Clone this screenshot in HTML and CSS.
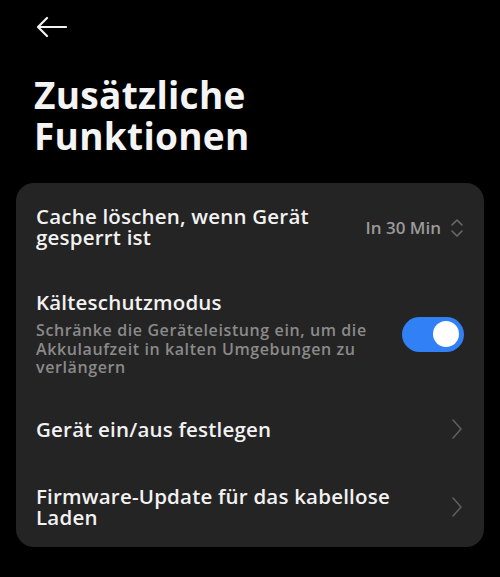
FILE: index.html
```html
<!DOCTYPE html>
<html lang="de">
<head>
<meta charset="utf-8">
<link rel="stylesheet" href="styles.css">
</head>
<body>
<div class="screen">
  <header class="topbar">
    <svg class="back" width="32" height="22" viewBox="0 0 32 22"><path d="M31 11H3M12 2L3 11l9 9" fill="none" stroke="#f2f2f2" stroke-width="2.2" stroke-linecap="round" stroke-linejoin="round"/></svg>
  </header>
  <h1 class="title"><span class="line">Zusätzliche</span><span class="line">Funktionen</span></h1>
  <section class="card">
    <div class="row row1">
      <div class="text"><div class="label">Cache löschen, wenn Gerät gesperrt ist</div></div>
      <div class="value">In 30 Min</div>
      <svg class="updown" width="14" height="22" viewBox="0 0 14 22"><path d="M2 8l5-5 5 5M2 14l5 5 5-5" fill="none" stroke="#6a6a6a" stroke-width="1.6" stroke-linecap="round" stroke-linejoin="round"/></svg>
    </div>
    <div class="row row2">
      <div class="text">
        <div class="label">Kälteschutzmodus</div>
        <div class="sub">Schränke die Geräteleistung ein, um die Akkulaufzeit in kalten Umgebungen zu verlängern</div>
      </div>
      <div class="toggle"><span class="knob"></span></div>
    </div>
    <div class="row row3">
      <div class="text"><div class="label">Gerät ein/aus festlegen</div></div>
      <svg class="chev" width="12" height="20" viewBox="0 0 12 20"><path d="M2 1l8 9-8 9" fill="none" stroke="#5e5e5e" stroke-width="1.6" stroke-linecap="round" stroke-linejoin="round"/></svg>
    </div>
    <div class="row row4">
      <div class="text"><div class="label">Firmware-Update für das kabellose Laden</div></div>
      <svg class="chev" width="12" height="20" viewBox="0 0 12 20"><path d="M2 1l8 9-8 9" fill="none" stroke="#5e5e5e" stroke-width="1.6" stroke-linecap="round" stroke-linejoin="round"/></svg>
    </div>
  </section>
</div>
</body>
</html>
```

FILE: styles.css
```css
html, body {
  margin: 0;
  padding: 0;
  background: #000;
}
body {
  font-family: "Open Sans", "Noto Sans", sans-serif;
  color: #f2f2f2;
}
.screen {
  width: 500px;
  height: 577px;
  overflow: hidden;
}
.topbar {
  height: 54px;
  display: flex;
  align-items: center;
  padding-left: 35px;
}
.back {
  display: block;
  margin-top: -1px;
}
.title {
  margin: 0;
  padding: 20px 0 0 34px;
  font-size: 37px;
  line-height: 41px;
  font-weight: 700;
  letter-spacing: 0.3px;
  color: #f4f4f4;
}
.title .line {
  display: block;
}
.card {
  margin: 27px 16px 0 16px;
  background: #242424;
  border-radius: 18px;
  padding: 0 20px;
}
.row {
  display: flex;
  align-items: center;
}
.text {
  flex: 1;
  min-width: 0;
}
.label {
  font-size: 20.5px;
  line-height: 21px;
  font-weight: 600;
  letter-spacing: 0.2px;
  color: #f2f2f2;
}
.sub {
  margin-top: 8px;
  font-size: 16px;
  line-height: 18.5px;
  font-weight: 600;
  letter-spacing: 0.6px;
  color: #8a8a8a;
}
.row1 {
  padding: 23px 0 21px;
}
.row1 .text {
  padding-right: 30px;
}
.value {
  font-size: 17px;
  font-weight: 600;
  color: #9a9a9a;
  margin-right: 9px;
}
.updown {
  display: block;
  margin-top: 1px;
}
.row2 {
  padding: 23px 0 20px;
}
.row2 .text {
  padding-right: 20px;
}
.toggle {
  width: 62px;
  height: 35px;
  border-radius: 18px;
  background: #3280f5;
  position: relative;
  flex-shrink: 0;
}
.knob {
  position: absolute;
  right: 5px;
  top: 4.5px;
  width: 26px;
  height: 26px;
  border-radius: 50%;
  background: #fff;
}
.row3 {
  padding: 22px 0 22px;
}
.row4 {
  padding: 24px 0 19px;
}
.row4 .text {
  padding-right: 40px;
}
.chev {
  display: block;
  margin-right: 1px;
}
```
